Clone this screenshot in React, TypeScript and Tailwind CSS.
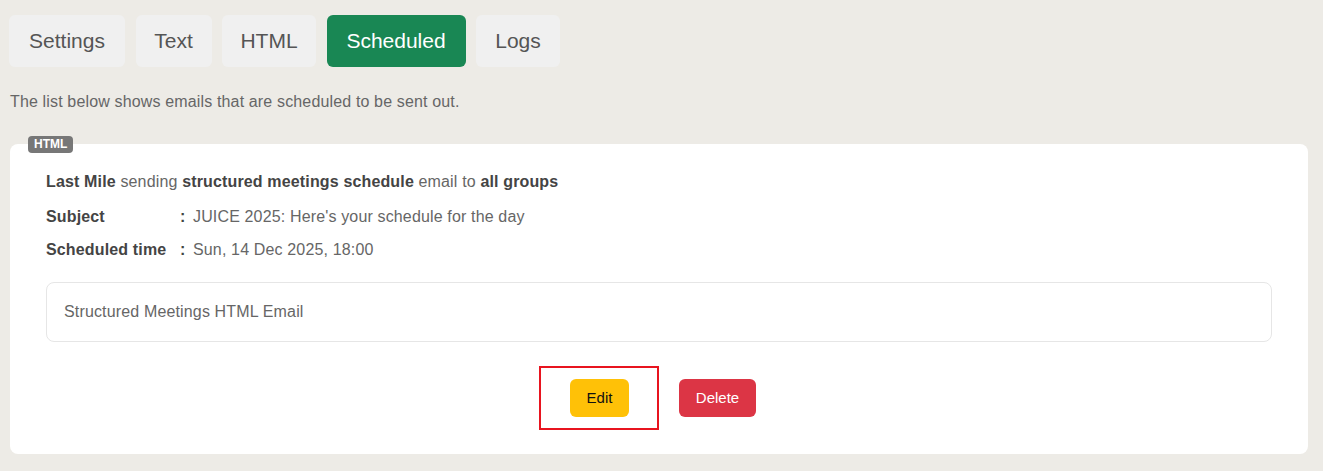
import type { FC } from "react";

const tabs = [
  { label: "Settings", w: "w-[116px]" },
  { label: "Text", w: "w-[76px]" },
  { label: "HTML", w: "w-[94px]" },
  { label: "Scheduled", w: "w-[139px]" },
  { label: "Logs", w: "w-[84px]" },
];

const Tab: FC<{ label: string; w: string; active?: boolean }> = ({ label, w, active }) => (
  <button
    className={
      active
        ? `${w} h-[52px] rounded-md bg-[#198754] text-white text-[21px]`
        : `${w} h-[52px] rounded-md bg-[#f0f0f0] text-[#555] text-[21px]`
    }
  >
    {label}
  </button>
);

const App: FC = () => {
  return (
    <div className="min-h-[471px] bg-[#edebe6] px-[10px] pt-[15px] text-[#666] font-['Liberation_Sans',Arial,sans-serif]">
      <div className="flex gap-[10.5px] -ml-px">
        {tabs.map((t) => (
          <Tab key={t.label} label={t.label} w={t.w} active={t.label === "Scheduled"} />
        ))}
      </div>

      <p className="mt-[26px] text-[16px] tracking-[0.15px] leading-[18px]">
        The list below shows emails that are scheduled to be sent out.
      </p>

      <div className="relative mt-[33px] w-[1298px] rounded-lg bg-white pl-9 pr-9 pt-[29px] pb-[24px]">
        <span className="absolute left-[18px] -top-2 rounded bg-[#777] px-[6px] h-[17px] leading-[17px] text-[12px] font-bold text-white">
          HTML
        </span>

        <p className="text-[16px] tracking-[0.15px] leading-[18px]">
          <b className="text-[#444]">Last Mile</b> sending{" "}
          <b className="text-[#444]">structured meetings schedule</b> email to{" "}
          <b className="text-[#444]">all groups</b>
        </p>

        <div className="mt-[17px] grid grid-cols-[134px_13px_1fr] gap-y-[15px] text-[16px] tracking-[0.15px] leading-[18px]">
          <b className="text-[#444]">Subject</b>
          <b className="text-[#444]">:</b>
          <span>JUICE 2025: Here's your schedule for the day</span>
          <b className="text-[#444]">Scheduled time</b>
          <b className="text-[#444]">:</b>
          <span>Sun, 14 Dec 2025, 18:00</span>
        </div>

        <div className="mt-[23px] h-[60px] rounded-lg border border-[#e6e6e6] px-[17px] flex items-center text-[16px] tracking-[0.15px]">
          Structured Meetings HTML Email
        </div>

        <div className="mt-6 flex justify-center items-center gap-5 pr-[23px]">
          <div className="w-[120px] flex justify-center border-2 border-[#e8141f] pl-px py-[11px]">
            <button className="w-[59px] h-[38px] rounded-md bg-[#ffc107] text-[#111] text-[15px]">
              Edit
            </button>
          </div>
          <button className="w-[77px] h-[38px] rounded-md bg-[#dc3545] text-white text-[15px]">
            Delete
          </button>
        </div>
      </div>
    </div>
  );
};

export default App;
